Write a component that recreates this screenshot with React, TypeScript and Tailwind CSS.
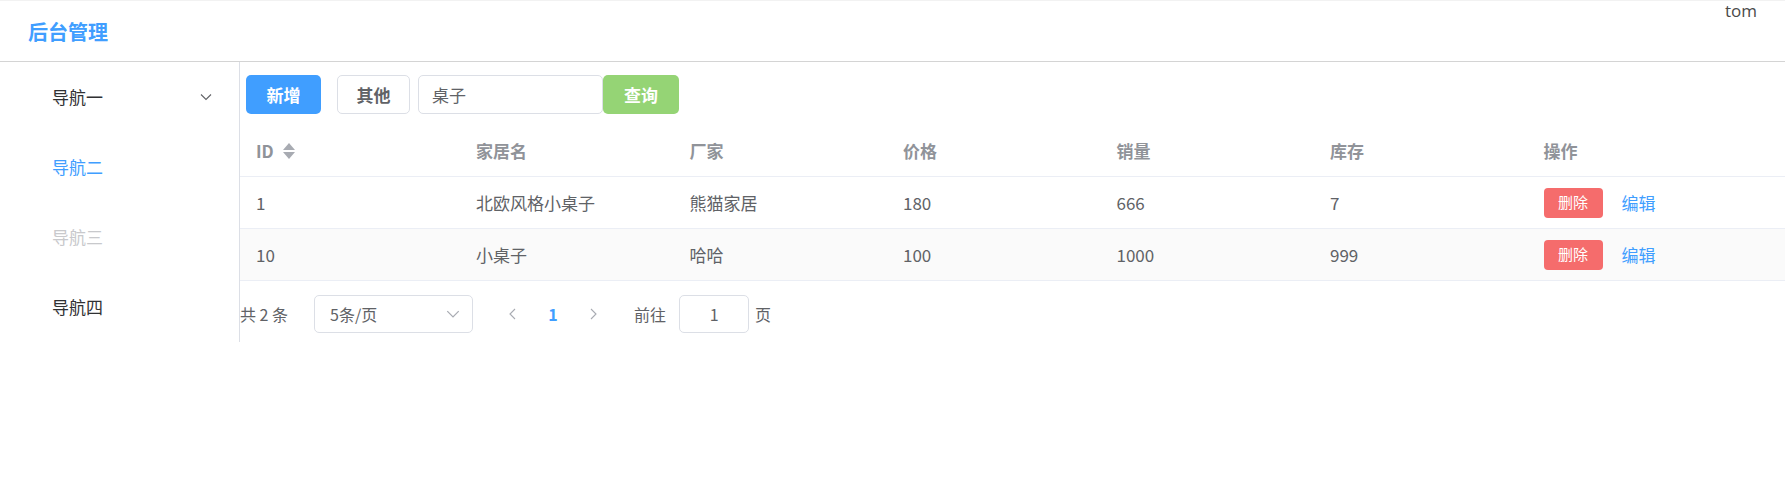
import { useState } from "react";

const rows = [
  { id: "1", name: "北欧风格小桌子", maker: "熊猫家居", price: "180", sales: "666", stock: "7" },
  { id: "10", name: "小桌子", maker: "哈哈", price: "100", sales: "1000", stock: "999" },
];

const cols = "grid grid-cols-[220px_213.5px_213.5px_213.5px_213.5px_213.5px_1fr]";

function Chevron({ dir = "down", className = "" }: { dir?: "down" | "left" | "right"; className?: string }) {
  const d =
    dir === "down" ? "M2 4.5l5 5 5-5" : dir === "left" ? "M9 2L4 7l5 5" : "M5 2l5 5-5 5";
  return (
    <svg viewBox="0 0 14 14" className={className} fill="none" stroke="currentColor" strokeWidth="1.1">
      <path d={d} />
    </svg>
  );
}

function SortCaret() {
  return (
    <span className="ml-[9px] inline-flex flex-col gap-[2px]">
      <span className="w-0 h-0 border-x-[6px] border-x-transparent border-b-[7px] border-b-[#a8abb2]" />
      <span className="w-0 h-0 border-x-[6px] border-x-transparent border-t-[7px] border-t-[#a8abb2]" />
    </span>
  );
}

export default function App() {
  const [query, setQuery] = useState("桌子");
  const menu = [
    { label: "导航一", cls: "text-[#303133]", sub: true },
    { label: "导航二", cls: "text-[#409eff]" },
    { label: "导航三", cls: "text-[#c8c9cc]" },
    { label: "导航四", cls: "text-[#303133]" },
  ];

  return (
    <div
      className="w-[1785px] h-[501px] bg-white overflow-hidden"
      style={{ fontFamily: '"Noto Sans CJK SC", "Noto Sans", sans-serif' }}
    >
      <header className="h-[62px] border-t border-[#f2f2f2] border-b border-b-[#d4d4d4] flex justify-between pl-[28px] pr-[28px]">
        <div className="self-center text-[20px] font-bold text-[#409eff] mt-[2px]">后台管理</div>
        <div className="self-start text-[17px] leading-none text-[#4a4a4a] mt-[1px]" style={{ fontFamily: '"Open Sans", sans-serif' }}>
          tom
        </div>
      </header>

      <div className="flex">
        <aside className="w-[240px] h-[280px] border-r border-[#dcdfe6] shrink-0">
          {menu.map((m) => (
            <div key={m.label} className={`h-[70px] flex items-center pl-[52px] pr-[26px] text-[17px] font-normal ${m.cls}`}>
              <span className="flex-1">{m.label}</span>
              {m.sub && <Chevron className="w-[14px] h-[14px] text-[#606266]" />}
            </div>
          ))}
        </aside>

        <main className="flex-1">
          <div className="pt-[13px] pl-[6px] flex items-center">
            <button className="h-[39px] w-[75px] rounded-[5px] bg-[#409eff] text-white text-[17px] font-bold">新增</button>
            <button className="ml-[16px] h-[39px] w-[73px] rounded-[5px] border border-[#dcdfe6] text-[#606266] text-[17px] font-bold">
              其他
            </button>
            <input
              value={query}
              onChange={(e) => setQuery(e.target.value)}
              className="ml-[8px] h-[39px] w-[185px] rounded-[5px] border border-[#dcdfe6] pl-[13px] text-[17px] text-[#606266] outline-none"
            />
            <button className="h-[39px] w-[76px] rounded-[5px] bg-[#95d475] text-white text-[17px] font-bold">查询</button>
          </div>

          <div className="mt-[11px] text-[17px]">
            <div className={`${cols} h-[52px] items-center border-b border-[#ebeef5] text-[#909399] font-bold`}>
              <div className="pl-[16px] flex items-center">
                ID
                <SortCaret />
              </div>
              <div className="pl-[16px]">家居名</div>
              <div className="pl-[16px]">厂家</div>
              <div className="pl-[16px]">价格</div>
              <div className="pl-[16px]">销量</div>
              <div className="pl-[16px]">库存</div>
              <div className="pl-[16px]">操作</div>
            </div>
            {rows.map((r, i) => (
              <div
                key={r.id}
                className={`${cols} h-[52px] items-center border-b border-[#ebeef5] text-[#606266] ${i % 2 ? "bg-[#fafafa]" : ""}`}
              >
                <div className="pl-[16px]">{r.id}</div>
                <div className="pl-[16px]">{r.name}</div>
                <div className="pl-[16px]">{r.maker}</div>
                <div className="pl-[16px]">{r.price}</div>
                <div className="pl-[16px]">{r.sales}</div>
                <div className="pl-[16px]">{r.stock}</div>
                <div className="pl-[16px] flex items-center">
                  <button className="h-[30px] w-[59px] rounded-[4px] bg-[#f56c6c] text-white text-[15px]">删除</button>
                  <button className="ml-[19px] text-[#409eff] text-[17px]">编辑</button>
                </div>
              </div>
            ))}
          </div>

          <div className="mt-[14px] flex items-center h-[38px] text-[16px] text-[#606266]">
            <span>共 2 条</span>
            <div className="ml-[26px] h-[38px] w-[159px] rounded-[5px] border border-[#dcdfe6] flex items-center pl-[15px] pr-[11px]">
              <span className="flex-1">5条/页</span>
              <Chevron className="w-[16px] h-[16px] text-[#a8abb2]" />
            </div>
            <div className="ml-[20px] flex items-center">
              <span className="w-[40px] flex justify-center text-[#a8abb2]">
                <Chevron dir="left" className="w-[14px] h-[14px]" />
              </span>
              <span className="w-[40px] text-center font-bold text-[#409eff]">1</span>
              <span className="w-[40px] flex justify-center text-[#a8abb2]">
                <Chevron dir="right" className="w-[14px] h-[14px]" />
              </span>
            </div>
            <span className="ml-[21px]">前往</span>
            <div className="ml-[13px] h-[38px] w-[70px] rounded-[5px] border border-[#dcdfe6] flex items-center justify-center">1</div>
            <span className="ml-[6px]">页</span>
          </div>
        </main>
      </div>
    </div>
  );
}
